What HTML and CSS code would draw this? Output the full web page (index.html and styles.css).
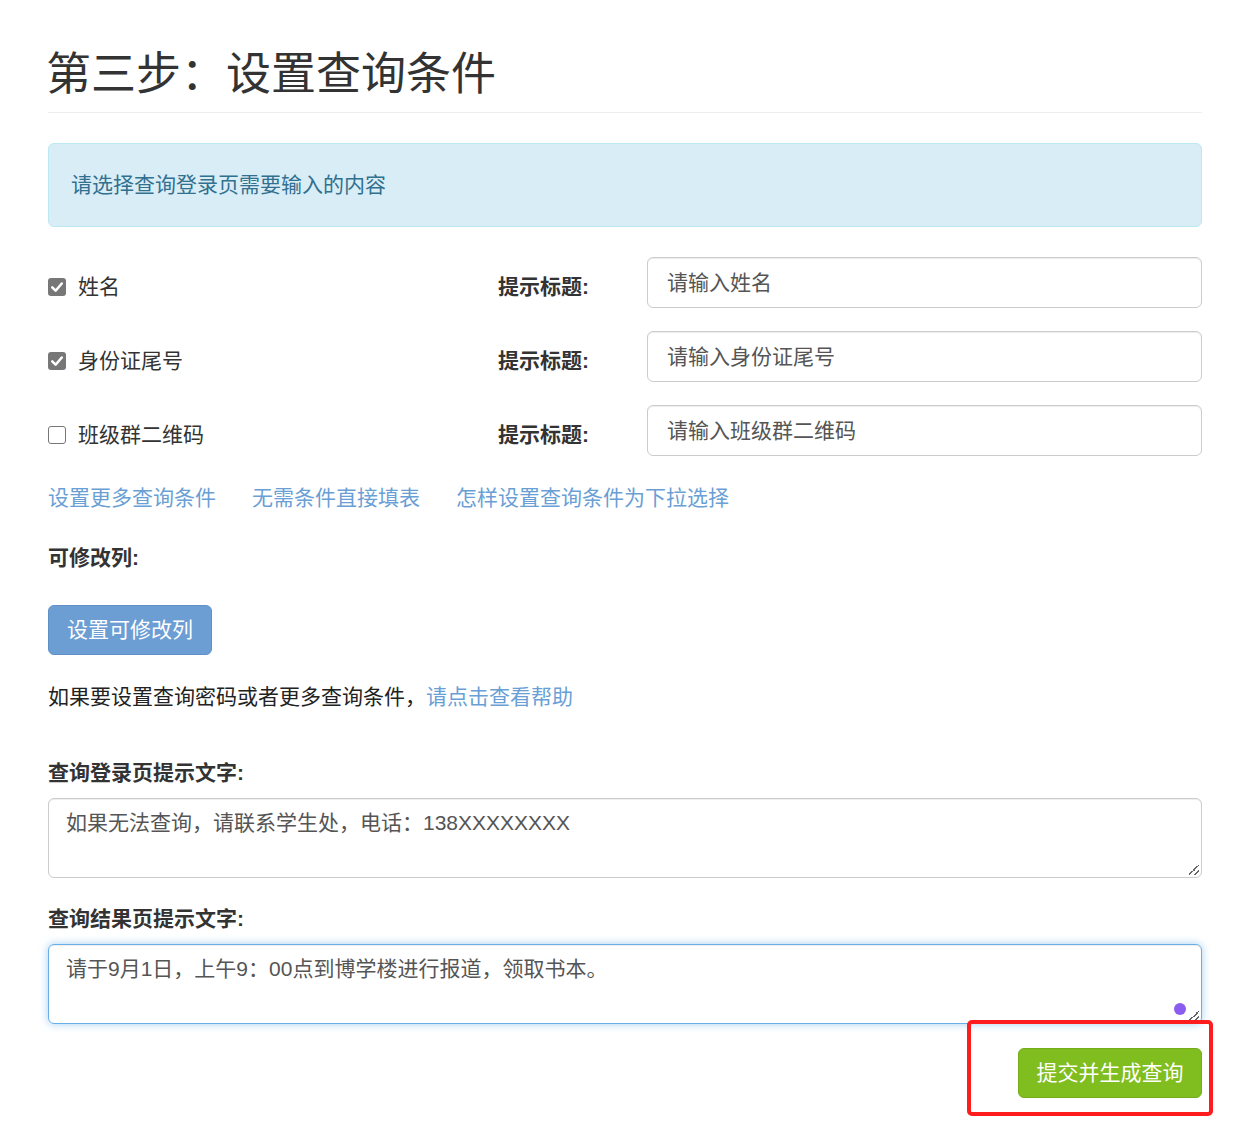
FILE: index.html
```html
<!DOCTYPE html>
<html lang="zh-CN">
<head>
<meta charset="utf-8">
<title>第三步：设置查询条件</title>
<link rel="stylesheet" href="styles.css">
</head>
<body>
<div class="container">
  <h2 class="page-header">第三步：设置查询条件</h2>

  <div class="alert">请选择查询登录页需要输入的内容</div>

  <div class="cond-list">
    <div class="cond-row">
      <label class="check"><span class="box checked"><svg viewBox="0 0 17 17" width="17" height="17"><path d="M4 8.8 L7.2 12 L13 5.2" fill="none" stroke="#fff" stroke-width="2.4" stroke-linecap="round" stroke-linejoin="round"/></svg></span>姓名</label>
      <span class="hint-label">提示标题:</span>
      <div class="input">请输入姓名</div>
    </div>
    <div class="cond-row">
      <label class="check"><span class="box checked"><svg viewBox="0 0 17 17" width="17" height="17"><path d="M4 8.8 L7.2 12 L13 5.2" fill="none" stroke="#fff" stroke-width="2.4" stroke-linecap="round" stroke-linejoin="round"/></svg></span>身份证尾号</label>
      <span class="hint-label">提示标题:</span>
      <div class="input">请输入身份证尾号</div>
    </div>
    <div class="cond-row">
      <label class="check"><span class="box"></span>班级群二维码</label>
      <span class="hint-label">提示标题:</span>
      <div class="input">请输入班级群二维码</div>
    </div>
  </div>

  <div class="links">
    <a href="#">设置更多查询条件</a>
    <a href="#">无需条件直接填表</a>
    <a href="#">怎样设置查询条件为下拉选择</a>
  </div>

  <div class="section-label editable">可修改列:</div>
  <div><button class="btn btn-blue">设置可修改列</button></div>

  <p class="help">如果要设置查询密码或者更多查询条件，<a href="#">请点击查看帮助</a></p>

  <div class="section-label login-label">查询登录页提示文字:</div>
  <div class="textarea">如果无法查询，请联系学生处，电话：138XXXXXXXX</div>

  <div class="section-label result-label">查询结果页提示文字:</div>
  <div class="textarea focus">请于9月1日，上午9：00点到博学楼进行报道，领取书本。<span class="dot"></span></div>

  <div class="actions">
    <button class="btn btn-green">提交并生成查询</button>
    <span class="annot"></span>
  </div>
</div>
</body>
</html>
```

FILE: styles.css
```css
* { box-sizing: border-box; }
html, body { margin: 0; padding: 0; background: #fff; }
body {
  font-family: "Liberation Sans", "Noto Sans CJK SC", sans-serif;
  font-size: 21px;
  line-height: 30px;
  color: #333;
}
.container {
  width: 1154px;
  margin-left: 48px;
  padding-top: 50px;
  padding-bottom: 40px;
}
.page-header {
  margin: 0;
  text-indent: -2px;
  font-size: 45px;
  font-weight: 400;
  line-height: 50px;
  padding-bottom: 12px;
  border-bottom: 1px solid #eee;
  color: #333;
}
.alert {
  margin-top: 30px;
  height: 84px;
  display: flex;
  align-items: center;
  padding: 0 22px;
  background: #d9edf7;
  border: 1px solid #bce8f1;
  border-radius: 6px;
  color: #31708f;
}
.cond-list {
  margin-top: 30px;
  display: flex;
  flex-direction: column;
  gap: 23px;
}
.cond-row {
  display: grid;
  grid-template-columns: 450px 149px 1fr;
  align-items: center;
  height: 51px;
}
.check {
  display: flex;
  align-items: center;
  gap: 12px;
  margin-top: 9px;
}
.box {
  width: 18px;
  height: 18px;
  border: 1.5px solid #767676;
  border-radius: 3px;
  background: #fff;
  display: inline-block;
  flex: none;
}
.box.checked {
  background: #777;
  border: none;
}
.box svg { display: block; width: 18px; height: 18px; }
.hint-label {
  font-weight: 700;
  margin-top: 9px;
}
.input {
  height: 51px;
  border: 1px solid #ccc;
  border-radius: 6px;
  padding: 0 19px;
  display: flex;
  align-items: center;
  color: #555;
  box-shadow: inset 0 1px 1px rgba(0,0,0,.075);
}
.links {
  margin-top: 27px;
  display: flex;
  gap: 36px;
}
a { color: #6a9fd5; text-decoration: none; }
.section-label { font-weight: 700; }
.editable { margin-top: 30px; }
.btn {
  font-family: inherit;
  font-size: 21px;
  line-height: 30px;
  height: 50px;
  padding: 0 18px;
  border-radius: 6px;
  color: #fff;
  cursor: pointer;
  white-space: nowrap;
}
.btn-blue {
  margin-top: 32px;
  background: #6c9dd3;
  border: 1px solid #5f90c8;
  width: 164px;
}
.help {
  margin: 27px 0 0;
  color: #222;
}
.login-label { margin-top: 46px; }
.textarea {
  position: relative;
  margin-top: 10px;
  height: 80px;
  border: 1px solid #ccc;
  border-radius: 6px;
  padding: 9px 17px;
  color: #555;
  box-shadow: inset 0 1px 1px rgba(0,0,0,.075);
  overflow: hidden;
}
.textarea::after {
  content: "";
  position: absolute;
  right: 2px;
  bottom: 2px;
  width: 10px;
  height: 10px;
  background:
    linear-gradient(135deg, transparent 45%, #666 45%, #666 55%, transparent 55%) no-repeat,
    linear-gradient(135deg, transparent 72%, #666 72%, #666 82%, transparent 82%) no-repeat;
}
.result-label { margin-top: 26px; }
.textarea.focus {
  margin-top: 10px;
  border-color: #66afe9;
  box-shadow: inset 0 1px 1px rgba(0,0,0,.075), 0 0 8px rgba(102,175,233,.6);
}
.dot {
  position: absolute;
  right: 15px;
  bottom: 8px;
  width: 12px;
  height: 12px;
  border-radius: 50%;
  background: #8b5cf0;
}
.actions {
  position: relative;
  margin-top: 24px;
  display: flex;
  justify-content: flex-end;
}
.btn-green {
  width: 184px;
  height: 50px;
  padding: 0 10px;
  background: #80bd1f;
  border: 1px solid #74ad19;
}
.annot {
  position: absolute;
  right: -11px;
  top: -28px;
  width: 246px;
  height: 96px;
  border: 4px solid #ff1c1c;
  border-radius: 5px;
  pointer-events: none;
}
```
